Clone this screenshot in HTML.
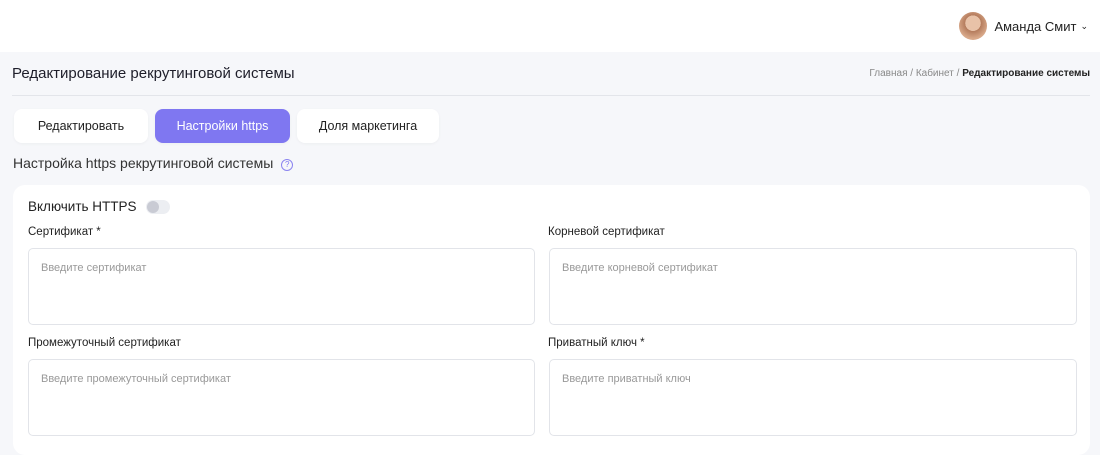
<!DOCTYPE html>
<html><head><meta charset="utf-8"><style>
*{box-sizing:border-box;margin:0;padding:0}
body{width:1100px;height:440px;overflow:hidden;background:#f6f7fa;font-family:"Liberation Sans",sans-serif;color:#222;position:relative}
.hdr{position:absolute;left:0;top:0;width:1100px;height:52px;background:#fff}
.user{position:absolute;right:12px;top:12px;display:flex;align-items:center;font-size:13px;color:#222}
.av{width:28px;height:28px;border-radius:50%;background:radial-gradient(circle at 50% 40%,#e8c2a8 0 35%,#b47b5c 36%,#d9a98a 70%);margin-right:7px}
.title{position:absolute;left:12px;top:65px;font-size:15px;color:#1e1e2a}
.bc{position:absolute;right:10px;top:68px;font-size:10px;color:#888}
.bc b{color:#222;font-weight:bold}
.line{position:absolute;left:12px;right:10px;top:95px;height:1px;background:#e3e5ea}
.tab{position:absolute;top:109px;height:34px;border-radius:8px;background:#fff;font-size:12.5px;display:flex;align-items:center;justify-content:center;color:#222;box-shadow:0 1px 3px rgba(0,0,0,.04)}
.tab.a{background:#7f77f1;color:#fff}
.sec{position:absolute;left:13px;top:155px;font-size:14px;color:#333}
.q{display:inline-block;width:12px;height:12px;border:1.3px solid #8b84f0;border-radius:50%;font-size:8px;color:#7f77f1;text-align:center;line-height:10px;margin-left:8px;vertical-align:1px}
.card{position:absolute;left:13px;top:185px;width:1077px;height:270px;background:#fff;border-radius:12px}
.lbl{position:absolute;font-size:11.5px;color:#222}
.ta{position:absolute;border:1px solid #e2e4e9;border-radius:5px;background:#fff;font-size:11px;color:#999;padding:13px 12px}
.tg{position:absolute;left:146px;top:200px;width:24px;height:14px;border-radius:7px;background:#eceef2}
.tg:after{content:"";position:absolute;left:1px;top:1px;width:12px;height:12px;border-radius:50%;background:#c9cbd4}
</style></head><body>
<div class="hdr"><div class="user"><div class="av"></div>Аманда Смит <span style="font-size:9px;margin-left:4px">⌄</span></div></div>
<div class="title">Редактирование рекрутинговой системы</div>
<div class="bc">Главная / Кабинет / <b>Редактирование системы</b></div>
<div class="line"></div>
<div class="tab" style="left:14px;width:134px">Редактировать</div>
<div class="tab a" style="left:155px;width:135px">Настройки https</div>
<div class="tab" style="left:297px;width:142px">Доля маркетинга</div>
<div class="sec">Настройка https рекрутинговой системы<span class="q">?</span></div>
<div class="card"></div>
<div class="lbl" style="left:28px;top:199px;font-size:13.5px">Включить HTTPS</div>
<div class="tg"></div>
<div class="lbl" style="left:28px;top:226px">Сертификат *</div>
<div class="lbl" style="left:548px;top:226px">Корневой сертификат</div>
<div class="ta" style="left:28px;top:248px;width:507px;height:77px">Введите сертификат</div>
<div class="ta" style="left:549px;top:248px;width:528px;height:77px">Введите корневой сертификат</div>
<div class="lbl" style="left:28px;top:337px">Промежуточный сертификат</div>
<div class="lbl" style="left:548px;top:337px">Приватный ключ *</div>
<div class="ta" style="left:28px;top:359px;width:507px;height:77px">Введите промежуточный сертификат</div>
<div class="ta" style="left:549px;top:359px;width:528px;height:77px">Введите приватный ключ</div>
</body></html>
